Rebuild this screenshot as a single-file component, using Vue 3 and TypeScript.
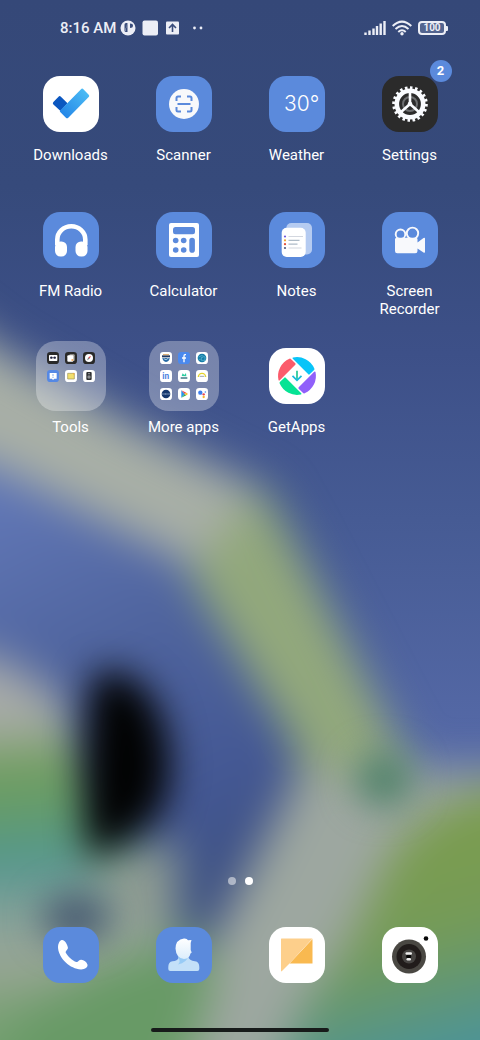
<script setup lang="ts">
import { ref } from 'vue'

interface AppEntry {
  id: string
  name: string
  badge?: number
  folder?: string[]
}

const apps: AppEntry[] = [
  { id: 'downloads', name: 'Downloads' },
  { id: 'scanner', name: 'Scanner' },
  { id: 'weather', name: 'Weather' },
  { id: 'settings', name: 'Settings', badge: 2 },
  { id: 'radio', name: 'FM Radio' },
  { id: 'calculator', name: 'Calculator' },
  { id: 'notes', name: 'Notes' },
  { id: 'recorder', name: 'Screen Recorder' },
  { id: 'tools', name: 'Tools', folder: ['tape', 'files', 'compass', 'feedback', 'memo', 'remote'] },
  {
    id: 'more',
    name: 'More apps',
    folder: ['bank', 'facebook', 'globe', 'linkedin', 'market', 'meter', 'samsung', 'play', 'assistant'],
  },
  { id: 'getapps', name: 'GetApps' },
]

const dock = [
  { id: 'phone', name: 'Phone' },
  { id: 'contacts', name: 'Contacts' },
  { id: 'messages', name: 'Messages' },
  { id: 'camera', name: 'Camera' },
]

const pages = [1, 2]
const current = ref(2)
const quarters = [
  { turn: 0, fill: '#fb5b6b' },
  { turn: 90, fill: '#08c4f8' },
  { turn: 180, fill: '#9060fa' },
  { turn: 270, fill: '#06e394' },
]
</script>

<template>
  <main class="screen">
    <svg class="wallpaper" viewBox="0 0 480 1040" preserveAspectRatio="none" aria-hidden="true">
      <defs>
        <linearGradient id="sky" x1="0" y1="0" x2="0" y2="1">
          <stop offset="0" stop-color="#354878" />
          <stop offset="0.18" stop-color="#364a7b" />
          <stop offset="0.34" stop-color="#3d5088" />
          <stop offset="0.5" stop-color="#465b94" />
          <stop offset="0.73" stop-color="#566aa8" />
        </linearGradient>
        <linearGradient id="inner" gradientUnits="userSpaceOnUse" x1="20" y1="480" x2="230" y2="900">
          <stop offset="0" stop-color="#6177b6" />
          <stop offset="0.4" stop-color="#4f649e" />
          <stop offset="0.75" stop-color="#445894" />
          <stop offset="1" stop-color="#3c4f80" />
        </linearGradient>
        <linearGradient id="hill" gradientUnits="userSpaceOnUse" x1="400" y1="860" x2="450" y2="1050">
          <stop offset="0" stop-color="#7a9c50" />
          <stop offset="0.4" stop-color="#759b58" />
          <stop offset="0.8" stop-color="#5b9580" />
          <stop offset="1" stop-color="#4c9498" />
        </linearGradient>
        <linearGradient id="shore" gradientUnits="userSpaceOnUse" x1="0" y1="660" x2="30" y2="1040">
          <stop offset="0" stop-color="#a6a9ac" />
          <stop offset="0.17" stop-color="#a8aca6" />
          <stop offset="0.28" stop-color="#729d5e" />
          <stop offset="0.4" stop-color="#649c6c" />
          <stop offset="0.53" stop-color="#52968f" />
          <stop offset="0.66" stop-color="#83a199" />
          <stop offset="0.8" stop-color="#9ca697" />
          <stop offset="0.94" stop-color="#76a072" />
        </linearGradient>
        <filter id="soft" filterUnits="userSpaceOnUse" x="-120" y="200" width="720" height="1000" color-interpolation-filters="sRGB">
          <feGaussianBlur stdDeviation="22" />
        </filter>
        <filter id="blob" filterUnits="userSpaceOnUse" x="-120" y="500" width="720" height="700" color-interpolation-filters="sRGB">
          <feGaussianBlur stdDeviation="18" />
        </filter>
      </defs>
      <rect width="480" height="1040" fill="url(#sky)" />
      <g filter="url(#soft)">
        <path d="M-80 400 L-20 445 L200 560 L306 775 L180 1100 L-80 1100Z" fill="url(#inner)" />
        <path d="M-90 282 L0 350 L130 424 L262 490 L210 574 L110 524 L0 468 L-90 436Z" fill="#a8afa6" />
        <path d="M262 484 L290 534 L394 735 L430 800 L305 800 L294 745 L188 574Z" fill="#92a87c" />
        <path d="M300 770 L425 770 L600 770 L600 1140 L150 1140 L202 960 L270 830Z" fill="#9da7a0" />
        <path d="M600 780 L490 790 L440 808 L396 845 L350 940 L300 1010 L250 1140 L600 1140Z" fill="url(#hill)" />
        <path d="M-90 646 L0 658 L60 696 L105 800 L150 860 L178 855 L178 940 L222 960 L200 1030 L160 1140 L-90 1140Z" fill="url(#shore)" />
        <path d="M105 965 L200 935 L212 980 L165 1120 L-20 1120 L20 1015Z" fill="#689a66" />
        <path d="M90 855 L178 840 L172 925 L110 925Z" fill="#8f9c92" />
      </g>
      <g filter="url(#blob)">
        <path d="M92 676 Q130 658 158 708 Q182 766 160 812 Q132 846 88 858 Q78 760 92 676Z" fill="#020303" />
        <ellipse cx="76" cy="918" rx="34" ry="24" fill="#465870" />
        <ellipse cx="384" cy="780" rx="28" ry="26" fill="#4c8068" />
      </g>
    </svg>

    <header class="status">
      <div class="status-left">
        <time>8:16 AM</time>
        <svg class="status-icons" viewBox="0 0 86 16" aria-hidden="true">
          <circle cx="8" cy="8" r="7.5" fill="#eceef6" />
          <path d="M4.5 12V4.5Q4.5 3 6 3H7.5M7.5 3V12H5M10 3.5V8Q13 8 13 5.5Q13 3.5 10 3.5Z" fill="#394c7b" />
          <rect x="22.500" y="0.500" width="15.500" height="15" rx="2" fill="#eceef6" />
          <rect x="46" y="1.500" width="13" height="13" rx="1" fill="#eceef6" />
          <path d="M52.500 12V4.500M49 8L52.500 4.500L56 8" fill="none" stroke="#394c7b" stroke-width="1.600" />
          <circle cx="74.500" cy="8" r="1.400" fill="#eceef6" />
          <circle cx="81" cy="8" r="1.400" fill="#eceef6" />
        </svg>
      </div>
      <div class="status-right">
        <svg class="signal" viewBox="0 0 22 16" aria-label="Signal">
          <path d="M1.500 15V12.500M5.500 15V10.500M9.500 15V8.500M13 15V6M16.700 15V3.500M20.500 15V1" fill="none" stroke="#eceef6" stroke-width="2.400" />
        </svg>
        <svg class="wifi" viewBox="0 0 20 16" aria-label="Wi-Fi">
          <g fill="none" stroke="#eceef6" stroke-width="2">
            <path d="M0.700 6Q10 -2.800 19.300 6" />
            <path d="M3.500 9Q10 3 16.500 9" />
            <path d="M6.300 12Q10 8.600 13.700 12" />
          </g>
          <circle cx="10" cy="13.800" r="1.700" fill="#eceef6" />
        </svg>
        <span class="battery"><span class="level">100</span></span>
      </div>
    </header>

    <section class="grid" aria-label="Apps">
      <button v-for="app in apps" :key="app.id" class="app" type="button">
        <span class="slot">
          <span v-if="app.folder" class="folder">
            <svg v-for="m in app.folder" :key="m" class="mini" viewBox="0 0 36 36" aria-hidden="true">
              <template v-if="m === 'tape'">
                <rect width="36" height="36" rx="10" fill="#292929" />
                <rect x="6" y="9" width="25" height="18" rx="2" fill="#fff" />
                <path d="M10 17H27" stroke="#8c8c98" stroke-width="3" />
                <circle cx="13" cy="17" r="3.500" fill="#222340" />
                <circle cx="23" cy="17" r="3.500" fill="#222340" />
              </template>
              <template v-else-if="m === 'files'">
                <rect width="36" height="36" rx="10" fill="#292929" />
                <rect x="13" y="7" width="16" height="20" rx="3" fill="#aaa6a1" />
                <rect x="7" y="10" width="18" height="19" rx="3" fill="#fff" />
                <circle cx="22" cy="24" r="3" fill="#f4ae62" />
              </template>
              <template v-else-if="m === 'compass'">
                <rect width="36" height="36" rx="10" fill="#292929" />
                <circle cx="18" cy="18" r="12" fill="#fff" />
                <path d="M24 11L20 20L16 16Z" fill="#e64b4e" />
                <path d="M12 25L16 16L20 20Z" fill="#777b82" />
              </template>
              <template v-else-if="m === 'feedback'">
                <rect width="36" height="36" rx="10" fill="#5588e4" />
                <path d="M8 9H29V26H22L18 30L15 26H8Z" fill="#fff" />
                <path d="M18 12V19M18 21V24" stroke="#6998e8" stroke-width="2.500" />
              </template>
              <template v-else-if="m === 'memo'">
                <rect width="36" height="36" rx="10" fill="#fff" />
                <path d="M8 10H28V27H8Z" fill="#f2df6d" stroke="#9b9157" stroke-width="2" />
                <path d="M22 10L28 16V10Z" fill="#faae35" />
              </template>
              <template v-else-if="m === 'remote'">
                <rect width="36" height="36" rx="10" fill="#fff" />
                <rect x="10" y="6" width="16" height="24" rx="3" fill="#303234" />
                <circle cx="18" cy="21" r="5" fill="#8d8f91" />
                <circle cx="18" cy="11" r="2" fill="#ddd" />
              </template>
              <template v-else-if="m === 'bank'">
                <rect width="36" height="36" rx="10" fill="#fff" />
                <path d="M6 10H30V16H6Z" fill="#233b63" />
                <path d="M9 8H27" stroke="#d7a260" stroke-width="3" />
                <path d="M7 18H29Q28 29 18 30Q9 29 7 18Z" fill="#2569a4" />
                <path d="M11 20Q18 27 26 18" fill="none" stroke="#fff" stroke-width="2" />
              </template>
              <template v-else-if="m === 'facebook'">
                <rect width="36" height="36" rx="10" fill="#4b89ed" />
                <path d="M24 8H21Q18 8 18 12V31M12 18H24" fill="none" stroke="#fff" stroke-width="4" />
              </template>
              <template v-else-if="m === 'globe'">
                <rect width="36" height="36" rx="10" fill="#fff" />
                <circle cx="18" cy="18" r="13" fill="#157da8" />
                <path d="M8 15Q18 6 27 15V25H16V16H22M8 22H14" fill="none" stroke="#65bdd5" stroke-width="2" />
              </template>
              <template v-else-if="m === 'linkedin'">
                <rect width="36" height="36" rx="10" fill="#fff" />
                <text x="17" y="27" text-anchor="middle" font-family="Roboto, sans-serif" font-size="25" font-weight="700" fill="#4d83df">in</text>
              </template>
              <template v-else-if="m === 'market'">
                <rect width="36" height="36" rx="10" fill="#fff" />
                <path d="M11 18L14 10L19 15L24 9L25 19Z" fill="#2ccda0" />
                <path d="M8 22H28V26H8Z" fill="#276776" />
              </template>
              <template v-else-if="m === 'meter'">
                <rect width="36" height="36" rx="10" fill="#fff" />
                <path d="M7 21A11 11 0 1 1 29 21" fill="none" stroke="#e4d42a" stroke-width="4" />
                <path d="M11 19H25" stroke="#71787e" stroke-width="2" />
              </template>
              <template v-else-if="m === 'samsung'">
                <rect width="36" height="36" rx="10" fill="#fff" />
                <circle cx="18" cy="18" r="13" fill="#15376e" />
                <path d="M7 18H29" stroke="#abc0dc" stroke-width="3" stroke-dasharray="3 1" />
              </template>
              <template v-else-if="m === 'play'">
                <rect width="36" height="36" rx="10" fill="#fff" />
                <path d="M10 7V29L20 18Z" fill="#2896ed" />
                <path d="M10 7L25 14L20 18Z" fill="#ea4650" />
                <path d="M10 29L25 22L20 18Z" fill="#31a95a" />
                <path d="M25 14L30 18L25 22L20 18Z" fill="#f8be25" />
              </template>
              <template v-else>
                <rect width="36" height="36" rx="10" fill="#fff" />
                <circle cx="13" cy="14" r="6.500" fill="#3e7fee" />
                <circle cx="23" cy="19" r="3.500" fill="#ea4650" />
                <circle cx="23" cy="27" r="3.500" fill="#f8b72b" />
                <circle cx="28" cy="12" r="2.500" fill="#4a91e9" />
              </template>
            </svg>
          </span>

          <svg v-else class="icon" viewBox="0 0 56 56" aria-hidden="true">
            <template v-if="app.id === 'downloads'">
              <defs>
                <linearGradient id="tick" x1="0" y1="1" x2="1" y2="0">
                  <stop offset="0" stop-color="#2080e6" />
                  <stop offset="1" stop-color="#50c2f6" />
                </linearGradient>
              </defs>
              <rect width="56" height="56" rx="17" fill="#fff" />
              <path d="M10.400 26.100L15.500 20.700Q16.700 19.500 17.900 20.700L24.500 27.300L17.500 35L10.400 28.500Q9.200 27.300 10.400 26.100Z" fill="#0b57c0" />
              <path d="M17.200 34.500L38 13.200Q39.200 12 40.400 13.200L45.700 18.700Q46.900 19.900 45.700 21.100L25.300 41.700Q24.100 42.900 22.900 41.700L17.200 36Q16.500 35.200 17.200 34.500Z" fill="url(#tick)" />
            </template>
            <template v-else-if="app.id === 'scanner'">
              <rect width="56" height="56" rx="17" fill="#5b8adc" />
              <circle cx="28" cy="28" r="15" fill="#f8f9fb" />
              <path d="M20.500 25V22Q20.500 20.500 22 20.500H25M31 20.500H34Q35.500 20.500 35.500 22V25M35.500 31V34Q35.500 35.500 34 35.500H31M25 35.500H22Q20.500 35.500 20.500 34V31M21.500 28H34.500" fill="none" stroke="#5b8adc" stroke-width="2" />
            </template>
            <template v-else-if="app.id === 'weather'">
              <rect width="56" height="56" rx="17" fill="#5b8adc" />
              <text x="15" y="35" font-family="Inter, Roboto, sans-serif" font-size="21" font-weight="300" fill="#fff">30°</text>
            </template>
            <template v-else-if="app.id === 'settings'">
              <rect width="56" height="56" rx="17" fill="#2b2b2b" />
              <circle cx="28" cy="28" r="16.300" fill="none" stroke="#fafcff" stroke-width="3" pathLength="40" stroke-dasharray="1 1" />
              <circle cx="28" cy="28" r="13.200" fill="none" stroke="#fafcff" stroke-width="4.600" />
              <circle cx="28" cy="28" r="7" fill="none" stroke="#6c6e70" stroke-width="2" />
              <path d="M28 28V16M28 28L18.500 36.500M28 28L37.500 36.500" stroke="#fafcff" stroke-width="2.600" />
              <circle cx="28" cy="28" r="2.300" fill="#fafcff" />
            </template>
            <template v-else-if="app.id === 'radio'">
              <rect width="56" height="56" rx="17" fill="#5b8adc" />
              <path d="M14.300 33V27.500A14 13.300 0 0 1 42.300 27.500V33" fill="none" stroke="#fff" stroke-width="4.600" />
              <rect x="12" y="29.500" width="12" height="15" rx="5.500" fill="#fff" />
              <rect x="32.500" y="29.500" width="12" height="15" rx="5.500" fill="#fff" />
            </template>
            <template v-else-if="app.id === 'calculator'">
              <rect width="56" height="56" rx="17" fill="#5b8adc" />
              <rect x="13" y="11" width="30" height="34" rx="2" fill="#fff" />
              <g fill="#5b8adc">
                <rect x="17" y="15" width="22" height="7.300" rx="2.500" />
                <circle cx="19.700" cy="28.500" r="2.800" />
                <circle cx="27.700" cy="28.500" r="2.800" />
                <circle cx="19.700" cy="38" r="2.800" />
                <circle cx="27.700" cy="38" r="2.800" />
                <rect x="33.300" y="25.700" width="5.600" height="15" rx="2.800" />
              </g>
            </template>
            <template v-else-if="app.id === 'notes'">
              <rect width="56" height="56" rx="17" fill="#5b8adc" />
              <rect x="17.300" y="11" width="25.700" height="31.500" rx="5" fill="#b5cbf1" />
              <rect x="12.700" y="15.700" width="24" height="29.300" rx="5" fill="#fff" />
              <g fill="none" stroke-width="1.200">
                <path d="M19.500 24.500H34M19.500 36H32.500" stroke="#d3d7df" />
                <path d="M19.500 28.300H30.500M19.500 32.200H28.500" stroke="#aebbc7" />
              </g>
              <circle cx="16" cy="24.500" r="1.100" fill="#7158db" />
              <circle cx="16" cy="28.300" r="1.100" fill="#f1a42b" />
              <circle cx="16" cy="32.200" r="1.100" fill="#e04b35" />
              <circle cx="16" cy="36" r="1.100" fill="#4e597e" />
            </template>
            <template v-else-if="app.id === 'recorder'">
              <rect width="56" height="56" rx="17" fill="#5b8adc" />
              <circle cx="18.500" cy="22.300" r="4.800" fill="none" stroke="#f8f9fc" stroke-width="1.900" />
              <circle cx="30.500" cy="21.300" r="5.700" fill="none" stroke="#f8f9fc" stroke-width="1.900" />
              <path d="M14.500 25.800H34Q35.500 25.800 35.500 27.300V30.500L41.500 26Q43 25.300 43 26.500V40Q43 41.200 41.500 40.600L35.500 36.500V39Q35.500 41.300 33.200 41.300H15.300Q13 41.300 13 39V27.300Q13 25.800 14.500 25.800Z" fill="#f8f9fc" />
            </template>
            <template v-else>
              <rect width="56" height="56" rx="17" fill="#fff" />
              <path v-for="q in quarters" :key="q.turn" d="M9.500 32A18.900 18.900 0 0 1 20.400 10.700Q21.200 10.200 21.900 10.900L26.300 15.300Q27 16 26.300 16.700L10.800 32.200Q9.900 33 9.500 32Z" :fill="q.fill" :transform="`rotate(${q.turn} 28 28)`" />
              <path d="M28 22.700V32" stroke="#22c795" stroke-width="1.700" />
              <path d="M23.500 27.800L28 32.300L32.500 27.800" fill="none" stroke="#17b9dd" stroke-width="1.700" />
            </template>
          </svg>
          <span v-if="app.badge" class="badge">{{ app.badge }}</span>
        </span>
        <span class="label">{{ app.name }}</span>
      </button>
    </section>

    <nav class="pages" aria-label="Home screen pages">
      <button
        v-for="p in pages"
        :key="p"
        type="button"
        class="dot"
        :class="{ active: p === current }"
        :aria-label="`Page ${p}`"
        @click="current = p"
      ></button>
    </nav>

    <footer class="dock">
      <button v-for="d in dock" :key="d.id" class="app" type="button" :aria-label="d.name">
        <svg class="icon" viewBox="0 0 56 56" aria-hidden="true">
          <template v-if="d.id === 'phone'">
            <rect width="56" height="56" rx="17" fill="#5b8adc" />
            <path d="M18.600 13C15.800 14.200 14.800 18 15.100 21.500C16.200 31.500 27 42 38 42.400C42 42.500 45 40 44.500 37.700C43.800 35 40.800 33 38.300 32.700C36 32.600 35.300 35.200 33.300 34.900C29.500 34 24.800 29.300 22.700 25.500C22.200 24 25.200 22.600 24.900 20.500C24.300 17 21.300 12.200 18.600 13Z" fill="#fff" />
          </template>
          <template v-else-if="d.id === 'contacts'">
            <defs>
              <linearGradient id="face" x1="0" y1="0" x2="0" y2="1">
                <stop offset="0" stop-color="#fff" />
                <stop offset="1" stop-color="#dceefc" />
              </linearGradient>
            </defs>
            <rect width="56" height="56" rx="17" fill="#5b8adc" />
            <path d="M22.500 29V31Q21.500 34 16.500 34.300Q12.300 35 12.300 40V42Q12.300 44 14.300 44H41.300Q43.300 44 43.300 42V40Q43.300 35 39 34.300Q33 33.500 32.300 30Z" fill="#c3e0f8" />
            <path d="M22.500 28L32.300 29Q31 35.500 22 37.500Q25 34.500 22.500 31Z" fill="#98cbf5" />
            <path d="M28 11.500Q31 11.300 32 13.200L35.500 13L34.700 16V23L35.700 25.500L34.500 26.500Q33.500 31.500 28 32Q20 31 19.500 21.500Q19.700 12.500 28 11.500Z" fill="url(#face)" />
          </template>
          <template v-else-if="d.id === 'messages'">
            <rect width="56" height="56" rx="17" fill="#fff" />
            <path d="M43.500 12V36.500H20.500Z" fill="#f9b950" />
            <path d="M12.500 11.500H43.500L20.500 36.500L13 44Q12 45 12 43.500V12Q12 11.500 12.500 11.500Z" fill="#fdcf8b" />
          </template>
          <template v-else>
            <rect width="56" height="56" rx="17" fill="#fff" />
            <circle cx="27" cy="29.500" r="17" fill="#4a4843" />
            <circle cx="27" cy="29.500" r="12.500" fill="#211c1b" />
            <circle cx="27" cy="29.500" r="7" fill="#474543" />
            <circle cx="26.700" cy="29.500" r="2.500" fill="#050505" />
            <rect x="23.500" y="25.300" width="6.500" height="2.400" rx="1.200" fill="#eee" />
            <rect x="24.500" y="31" width="4.500" height="2.400" rx="1.200" fill="#eee" />
            <circle cx="44" cy="11.500" r="2.300" fill="#080808" />
          </template>
        </svg>
      </button>
    </footer>
    <div class="home-bar"></div>
  </main>
</template>

<style>
html,
body {
  margin: 0;
  background: #35497a;
}
</style>

<style scoped>
.screen {
  position: relative;
  isolation: isolate;
  display: flex;
  flex-direction: column;
  box-sizing: border-box;
  min-height: 100vh;
  padding-bottom: 8px;
  overflow: hidden;
  color: #fff;
  font-family: Roboto, "Noto Sans", sans-serif;
}

.wallpaper {
  position: absolute;
  inset: 0;
  z-index: -1;
  width: 100%;
  height: 100%;
}

.status {
  display: flex;
  align-items: center;
  justify-content: space-between;
  height: 56px;
  padding: 0 32px 0 60px;
  color: #eceef6;
}

.status-left,
.status-right {
  display: flex;
  align-items: center;
}

.status-left {
  gap: 4px;
}

.status-right {
  gap: 6px;
}

.status time {
  font-size: 15px;
  font-weight: 500;
  line-height: 20px;
}

.status-icons {
  width: 86px;
  height: 16px;
}

.signal {
  width: 22px;
  height: 16px;
}

.wifi {
  width: 20px;
  height: 16px;
}

.battery {
  display: flex;
  align-items: center;
}

.level {
  box-sizing: border-box;
  width: 28px;
  height: 14px;
  border: 2px solid #eceef6;
  border-radius: 4px;
  background: #53648f;
  font-size: 10px;
  font-weight: 700;
  line-height: 10px;
  text-align: center;
}

.battery::after {
  width: 2px;
  height: 5px;
  border-radius: 0 1px 1px 0;
  background: #eceef6;
  content: "";
}

.grid {
  display: grid;
  grid-template-columns: repeat(4, 1fr);
  grid-auto-rows: 136px;
  padding: 13px 14px 0;
}

.app {
  display: flex;
  flex-direction: column;
  align-items: center;
  gap: 7px;
  margin: 0;
  padding: 0;
  border: 0;
  background: none;
  color: inherit;
  font: inherit;
  cursor: pointer;
}

.slot {
  position: relative;
  display: grid;
  place-items: center;
  width: 70px;
  height: 70px;
}

.icon {
  display: block;
  width: 56px;
  height: 56px;
}

.folder {
  display: grid;
  grid-template-columns: repeat(3, 12px);
  grid-auto-rows: 12px;
  gap: 6px;
  box-sizing: border-box;
  width: 70px;
  height: 70px;
  padding: 11px;
  border-radius: 20px;
  background: rgba(255, 255, 255, 0.3);
}

.mini {
  display: block;
  width: 12px;
  height: 12px;
}

.badge {
  position: absolute;
  top: -9px;
  right: -7px;
  width: 22px;
  height: 22px;
  border-radius: 50%;
  background: #5b8adc;
  font-size: 13px;
  font-weight: 700;
  line-height: 22px;
  text-align: center;
}

.label {
  max-width: 90px;
  font-size: 15px;
  line-height: 18px;
  text-align: center;
}

.pages {
  display: flex;
  justify-content: center;
  gap: 9px;
  margin-top: auto;
  padding-bottom: 42px;
}

.dot {
  width: 8px;
  height: 8px;
  padding: 0;
  border: 0;
  border-radius: 50%;
  background: rgba(255, 255, 255, 0.5);
  cursor: pointer;
}

.dot.active {
  background: #fff;
}

.dock {
  display: grid;
  grid-template-columns: repeat(4, 1fr);
  padding: 0 14px 45px;
}

.home-bar {
  align-self: center;
  width: 37%;
  height: 4px;
  border-radius: 2px;
  background: #171b1a;
}
</style>
